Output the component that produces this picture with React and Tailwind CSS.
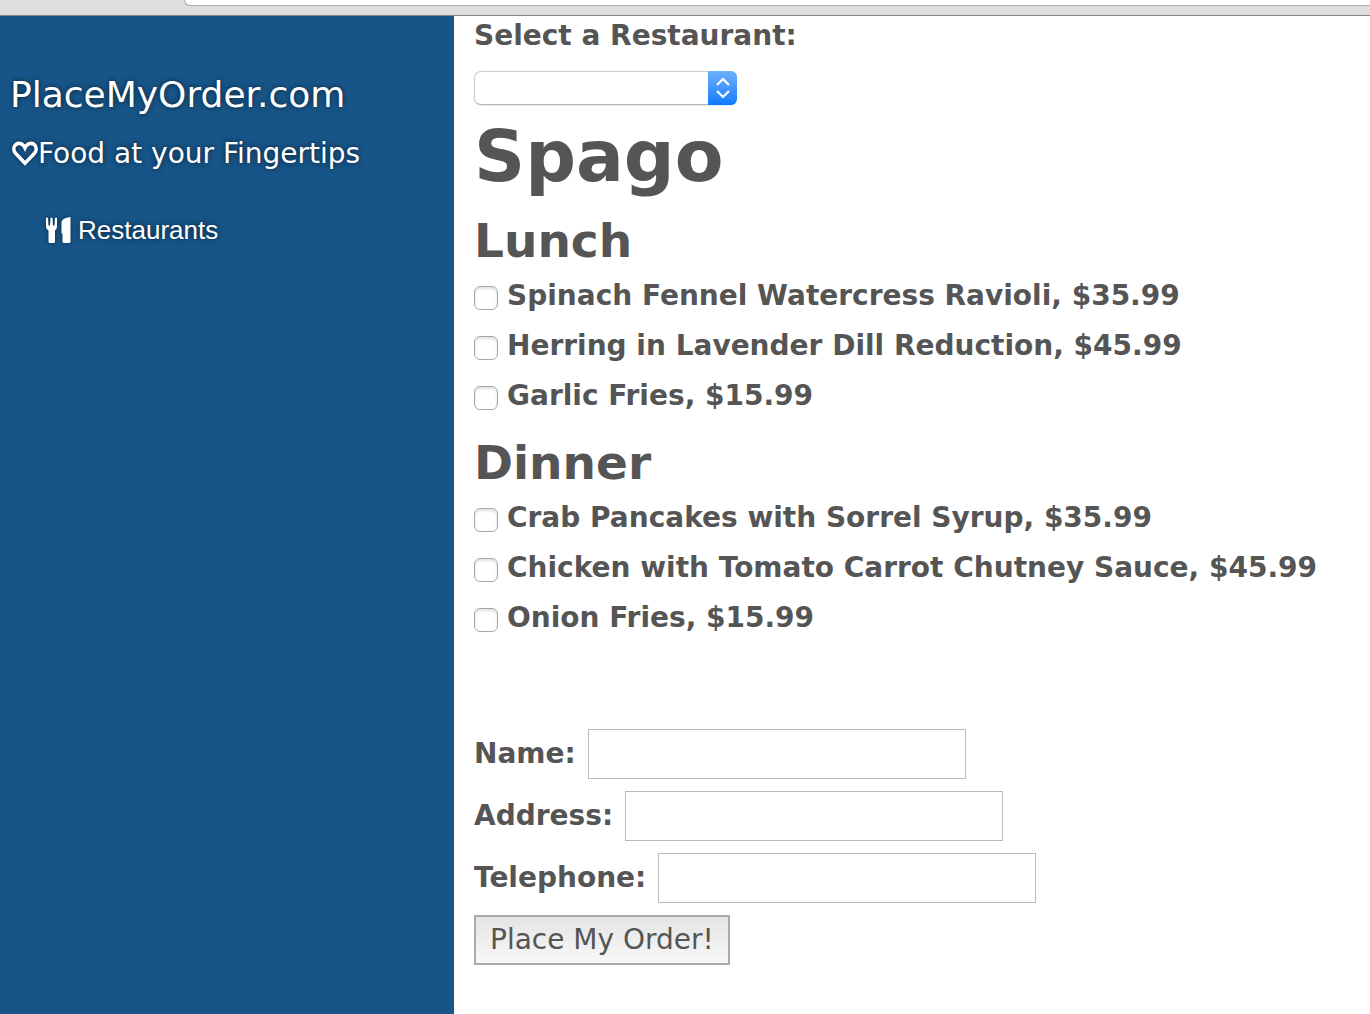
import React from "react";

const meals = [
  { title: "Lunch", items: ["Spinach Fennel Watercress Ravioli, $35.99", "Herring in Lavender Dill Reduction, $45.99", "Garlic Fries, $15.99"] },
  { title: "Dinner", items: ["Crab Pancakes with Sorrel Syrup, $35.99", "Chicken with Tomato Carrot Chutney Sauce, $45.99", "Onion Fries, $15.99"] },
];

const fields = ["Name", "Address", "Telephone"];

function HeartIcon() {
  return (
    <svg viewBox="0 0 26 26" className="h-[26px] w-[26px] drop-shadow-[0_0_2px_#00000080]" fill="none" stroke="currentColor" strokeWidth="3.6" aria-hidden="true">
      <path d="M13 22.200 3.500 12.300C1.500 10 1.300 6.500 3.200 4.200 5.500 1.500 10.500 1.500 13 6.800 15.500 1.500 20.500 1.500 22.800 4.200 24.700 6.500 24.500 10 22.500 12.300Z" />
    </svg>
  );
}

function CutleryIcon() {
  return (
    <svg viewBox="0 0 25 26" className="h-[26px] w-[25px] drop-shadow-[0_0_2px_#00000080]" fill="currentColor" aria-hidden="true">
      <path d="M0 1Q1 0 2 1L2.500 8.500H4L4.500 1Q5.500 0 6.500 1L7 8.500H8.500L9 1Q10 0 11 1V9.500Q11 12 9 13.500V24.500Q9 26 7.500 26H4Q2.500 26 2.500 24.500V13.500Q0 12 0 9.500Z" />
      <path d="M24.500 0V24.500Q24.500 26 23 26H18Q16.500 26 16.500 24.500V16.500H15.500V5Q16 1 24.500 0Z" />
    </svg>
  );
}

function Meal({ title, items }) {
  return (
    <section className="pb-3">
      <h2 className="h-[60px] text-[47px] leading-[60px] font-bold">{title}</h2>
      {items.map((item) => (
        <label key={item} className="flex h-[50px] items-center gap-[9px] text-[28px] leading-[44px] font-bold whitespace-nowrap">
          <input type="checkbox" className="mt-1 size-6 shrink-0 appearance-none rounded-[6px] border border-[#a8a8a8] bg-white shadow-[inset_0_2px_3px_#00000020]" />
          <span>{item}</span>
        </label>
      ))}
    </section>
  );
}

export default function App() {
  return (
    <div className="flex min-h-screen flex-col bg-white font-['Verdana','DejaVu_Sans',sans-serif] text-[#555555]">
      <div className="h-4 border-b border-[#888888] bg-[#dedede] pl-[184px]">
        <div className="h-[6px] rounded-bl-[6px] border-b border-l border-[#aaaaaa] bg-white" />
      </div>
      <div className="flex grow">
        <aside className="w-[454px] shrink-0 bg-[#175487] text-white [text-shadow:0_0_5px_#000000a0]">
          <h1 className="pt-[54px] pl-[10px] text-[36px] leading-[50px]">PlaceMyOrder.com</h1>
          <p className="flex items-center pt-[14px] pl-3 text-[28px] leading-[40px]">
            <HeartIcon />
            Food at your Fingertips
          </p>
          <a href="#restaurants" className="mt-[38px] ml-[46px] flex items-center gap-[7px] font-['Liberation_Sans',sans-serif] text-[26px] leading-[36px]">
            <CutleryIcon />
            Restaurants
          </a>
        </aside>
        <main className="min-w-0 grow pl-5">
          <label htmlFor="restaurant" className="block h-[55px] text-[28px] leading-[40px] font-bold">Select a Restaurant:</label>
          <div className="relative h-[34px] w-[263px]">
            <select id="restaurant" className="h-full w-full appearance-none rounded-[7px] border border-[#cccccc] border-b-[#b5b5b5] bg-white shadow-[0_1px_1px_#00000018]"><option></option></select>
            <span className="pointer-events-none absolute top-0 right-0 flex h-full w-[29px] items-center justify-center rounded-r-[6px] bg-linear-to-b from-[#6bb1fa] to-[#057aff]">
              <svg viewBox="0 0 16 24" className="h-6 w-4" fill="none" stroke="white" strokeWidth="2.2"><path d="m2 9 6-6 6 6M2 15l6 6 6-6" /></svg>
            </span>
          </div>
          <h1 className="h-[106px] text-[71px] leading-[104px] font-bold">Spago</h1>
          {meals.map((meal) => <Meal key={meal.title} {...meal} />)}
          <form className="flex flex-col items-start gap-3 pt-[74px] pb-[49px]">
            {fields.map((field) => (
              <div key={field} className="flex items-center gap-3">
                <label htmlFor={field} className="text-[28px] font-bold">{field}:</label>
                <input id={field} type="text" className="h-[50px] w-[378px] border border-[#bbbbbb] bg-white px-2 text-[28px]" />
              </div>
            ))}
            <button type="button" className="h-[50px] border-2 border-[#aaaaaa] bg-linear-to-b from-[#e4e4e4] to-[#f8f8f8] px-[14px] text-[28px] leading-[42px]">Place My Order!</button>
          </form>
        </main>
      </div>
    </div>
  );
}
